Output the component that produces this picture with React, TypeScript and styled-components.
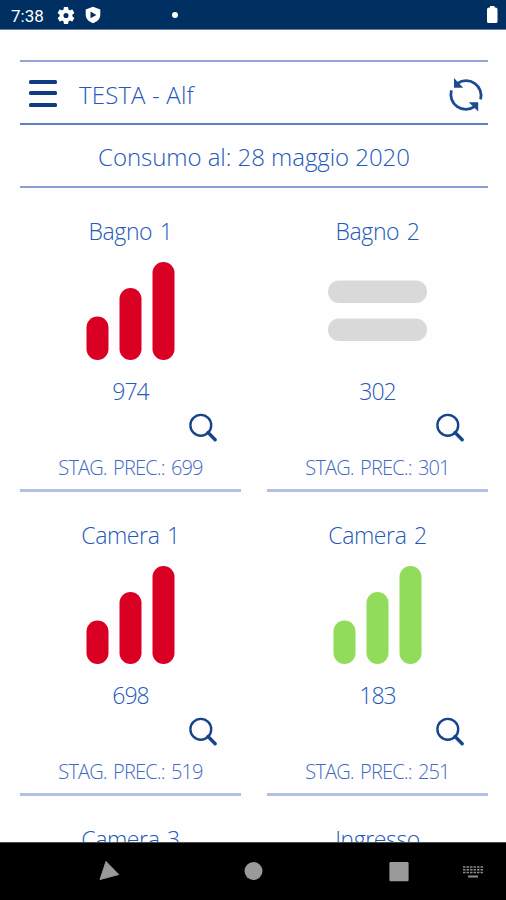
import React from 'react';
import styled, { createGlobalStyle } from 'styled-components';

const GlobalStyle = createGlobalStyle`
  * { box-sizing: border-box; }
  body { margin: 0; background: #fff; }
`;

const Screen = styled.div`
  width: 506px;
  height: 900px;
  display: flex;
  flex-direction: column;
  overflow: hidden;
  background: #fefefe;
  color: #2459b9;
  font-family: 'Open Sans', 'Noto Sans', sans-serif;
  font-weight: 350;
`;

const StatusBar = styled.header`
  height: 30px;
  flex: none;
  display: flex;
  align-items: center;
  padding: 1px 6px 0 11px;
  background: #003061;
  border-bottom: 1px solid #6d7fa5;
  color: #fff;
`;

const Clock = styled.span`
  width: 46px;
  padding-top: 1px;
  font: 400 17px/30px Roboto, sans-serif;
`;

const StatusIcons = styled.div`
  display: flex;
  gap: 9px;
  flex: 1;
  align-items: center;
`;

const Dot = styled.span`
  width: 6px;
  height: 6px;
  margin-left: 61px;
  border-radius: 50%;
  background: #fff;
`;

const Content = styled.main`
  flex: 1;
  min-height: 0;
  overflow: hidden;
  padding: 30px 18px 0 20px;
`;

const TitleBar = styled.div`
  height: 65px;
  display: flex;
  align-items: center;
  border-top: 2px solid #93a5d5;
  border-bottom: 2px solid #5f80c2;
  padding: 4px 4px 0 9px;
`;

const MenuButton = styled.button`
  display: flex;
  flex-direction: column;
  justify-content: space-between;
  width: 28px;
  height: 27px;
  margin: 0 22px 3px 0;
  padding: 0;
  border: 0;
  background: none;
`;

const MenuLine = styled.span`
  height: 4px;
  border-radius: 1.5px;
  background: #103c84;
`;

const PageTitle = styled.h1`
  flex: 1;
  margin: 0;
  font-size: 24px;
  line-height: 32px;
  font-weight: inherit;
  letter-spacing: 0.15px;
`;

const DateBar = styled.div`
  height: 63px;
  border-bottom: 2px solid #8b9fd2;
  text-align: center;
  font-size: 24px;
  line-height: 63px;
  letter-spacing: -0.05px;
`;

const RoomGrid = styled.section`
  display: grid;
  grid-template-columns: 221px 221px;
  justify-content: space-between;
`;

const RoomCard = styled.article`
  height: 304px;
  display: flex;
  flex-direction: column;
  align-items: center;
  padding-top: 27px;
  border-bottom: 3px solid #b4c0e1;
`;

const RoomName = styled.h2`
  height: 32px;
  margin: 0 0 15px;
  font-size: 23px;
  line-height: 32px;
  font-weight: inherit;
  letter-spacing: -0.4px;
  word-spacing: 2px;
`;

const Trend = styled.svg`
  width: 99px;
  height: 98px;
  flex: none;
  display: block;
`;

const Value = styled.div`
  height: 32px;
  margin-top: 15px;
  font-size: 23px;
  line-height: 32px;
  letter-spacing: -1px;
`;

const DetailButton = styled.button`
  align-self: flex-end;
  display: block;
  width: 30px;
  height: 30px;
  margin: 6px 23px 0 0;
  padding: 0;
  border: 0;
  background: none;
`;

const Previous = styled.div`
  margin-top: 12px;
  font-size: 20px;
  line-height: 26px;
  white-space: nowrap;
  letter-spacing: -0.85px;
  word-spacing: 2px;
  color: #3f69c3;
`;

const NavBar = styled.nav`
  height: 58px;
  flex: none;
  background: #000;
  border-top: 1px solid #4b4b4b;
  display: flex;
  align-items: center;
  padding-left: 98px;
`;

const NavIcon = styled.svg<{ $gap?: number }>`
  flex: none;
  margin-left: ${(p) => p.$gap ?? 0}px;
`;

type Level = 'high' | 'low' | 'equal';

interface Reading {
  value: number;
  previous: number;
  level: Level;
}

interface Room {
  name: string;
  reading?: Reading;
}

const rooms: Room[] = [
  { name: 'Bagno 1', reading: { value: 974, previous: 699, level: 'high' } },
  { name: 'Bagno 2', reading: { value: 302, previous: 301, level: 'equal' } },
  { name: 'Camera 1', reading: { value: 698, previous: 519, level: 'high' } },
  { name: 'Camera 2', reading: { value: 183, previous: 251, level: 'low' } },
  { name: 'Camera 3' },
  { name: 'Ingresso' },
];

function TrendIcon({ level }: { level: Level }) {
  if (level === 'equal') {
    return (
      <Trend viewBox="0 0 99 98" fill="#d9d9d9">
        <rect y="18.5" width="99" height="22.5" rx="11.2" />
        <rect y="56.5" width="99" height="22.5" rx="11.2" />
      </Trend>
    );
  }
  return (
    <Trend viewBox="0 0 99 98" fill={level === 'high' ? '#d90024' : '#91dc5a'}>
      <rect x="5.5" y="54.5" width="22" height="43.5" rx="11" />
      <rect x="38.5" y="26" width="22" height="72" rx="11" />
      <rect x="71.5" y="0" width="22" height="98" rx="11" />
    </Trend>
  );
}

function SearchIcon() {
  return (
    <svg width="30" height="30" viewBox="0 0 30 30" fill="none" stroke="#174489">
      <circle cx="12.8" cy="12.3" r="10.4" strokeWidth="2.4" />
      <path d="M20 19.5L27.2 26.7" strokeWidth="3.4" strokeLinecap="round" />
    </svg>
  );
}

function RefreshIcon() {
  return (
    <svg width="36" height="36" viewBox="0 0 36 36" fill="none" stroke="#1d4b91" strokeWidth="2.8">
      <path d="M9.5 6.3A15 15 0 0 1 32.6 22.4" />
      <path d="M3.4 13.4A15 15 0 0 0 26.5 29.7" />
      <path d="M6 1V10.8H15.2Z" fill="#1d4b91" stroke="none" />
      <path d="M20.8 25.3H30.2V34.4Z" fill="#1d4b91" stroke="none" />
    </svg>
  );
}

function GearIcon() {
  return (
    <svg width="18" height="17" viewBox="2 2 20 20" fill="#fff">
      <path d="M19.43 12.98c.04-.32.07-.64.07-.98s-.03-.66-.07-.98l2.11-1.65c.19-.15.24-.42.12-.64l-2-3.46c-.12-.22-.39-.3-.61-.22l-2.49 1c-.52-.4-1.08-.73-1.69-.98l-.38-2.65A.49.49 0 0 0 14 2h-4c-.25 0-.46.18-.49.42l-.38 2.65c-.61.25-1.17.59-1.69.98l-2.49-1c-.23-.09-.49 0-.61.22l-2 3.46c-.13.22-.07.49.12.64l2.11 1.65c-.04.32-.07.65-.07.98s.03.66.07.98l-2.11 1.65c-.19.15-.24.42-.12.64l2 3.46c.12.22.39.3.61.22l2.49-1c.52.4 1.08.73 1.69.98l.38 2.65c.03.24.24.42.49.42h4c.25 0 .46-.18.49-.42l.38-2.65c.61-.25 1.17-.59 1.69-.98l2.49 1c.23.09.49 0 .61-.22l2-3.46c.12-.22.07-.49-.12-.64l-2.11-1.65zM12 15a3 3 0 1 1 0-6 3 3 0 0 1 0 6z" />
    </svg>
  );
}

function ShieldIcon() {
  return (
    <svg width="18" height="18" viewBox="0 0 18 18">
      <path d="M9 .8L16.3 3.6V8.5C16.3 12.7 13.2 15.8 9 17.2C4.8 15.8 1.7 12.7 1.7 8.5V3.6Z" fill="#fff" />
      <path d="M6.5 5.6L12.4 8.9L6.5 12.2Z" fill="#003061" />
    </svg>
  );
}

export default function App() {
  return (
    <Screen>
      <GlobalStyle />
      <StatusBar>
        <Clock>7:38</Clock>
        <StatusIcons>
          <GearIcon />
          <ShieldIcon />
          <Dot />
        </StatusIcons>
        <svg width="15" height="20" viewBox="0 0 15 20">
          <path d="M5 2.5V1h4.500v1.500H10.500a2 2 0 0 1 2 2V16.500a1.500 1.500 0 0 1-1.500 1.500H3.500a1.500 1.500 0 0 1-1.500-1.500V4.500a2 2 0 0 1 2-2Z" fill="#fff" />
        </svg>
      </StatusBar>
      <Content>
        <TitleBar>
          <MenuButton aria-label="Menu">
            <MenuLine />
            <MenuLine />
            <MenuLine />
          </MenuButton>
          <PageTitle>TESTA - Alf</PageTitle>
          <RefreshIcon />
        </TitleBar>
        <DateBar>Consumo al: 28 maggio 2020</DateBar>
        <RoomGrid>
          {rooms.map(({ name, reading }) => (
            <RoomCard key={name}>
              <RoomName>{name}</RoomName>
              {reading && (
                <>
                  <TrendIcon level={reading.level} />
                  <Value>{reading.value}</Value>
                  <DetailButton aria-label={name}>
                    <SearchIcon />
                  </DetailButton>
                  <Previous>STAG. PREC.: {reading.previous}</Previous>
                </>
              )}
            </RoomCard>
          ))}
        </RoomGrid>
      </Content>
      <NavBar>
        <NavIcon width="22" height="22" viewBox="0 0 22 22">
          <path d="M8 .5L20.7 13.5L2 18.5Z" fill="#9a9a9a" stroke="#9a9a9a" strokeLinejoin="round" />
        </NavIcon>
        <NavIcon $gap={124} width="19" height="19" viewBox="0 0 19 19">
          <circle cx="9.5" cy="9" r="9" fill="#9a9a9a" />
        </NavIcon>
        <NavIcon $gap={126} width="20" height="20" viewBox="0 0 20 20">
          <rect x=".4" y="0" width="19.2" height="19.2" rx="1.3" fill="#9a9a9a" />
        </NavIcon>
        <NavIcon $gap={54} width="20" height="14" viewBox="0 0 20 14" stroke="#8c8c8c" fill="none">
          <path d="M0 2H20M0 4.700H20M0 7.400H20" strokeWidth="1.500" strokeDasharray="2.500 1" />
          <path d="M5 11.500H15" strokeWidth="2" />
        </NavIcon>
      </NavBar>
    </Screen>
  );
}
